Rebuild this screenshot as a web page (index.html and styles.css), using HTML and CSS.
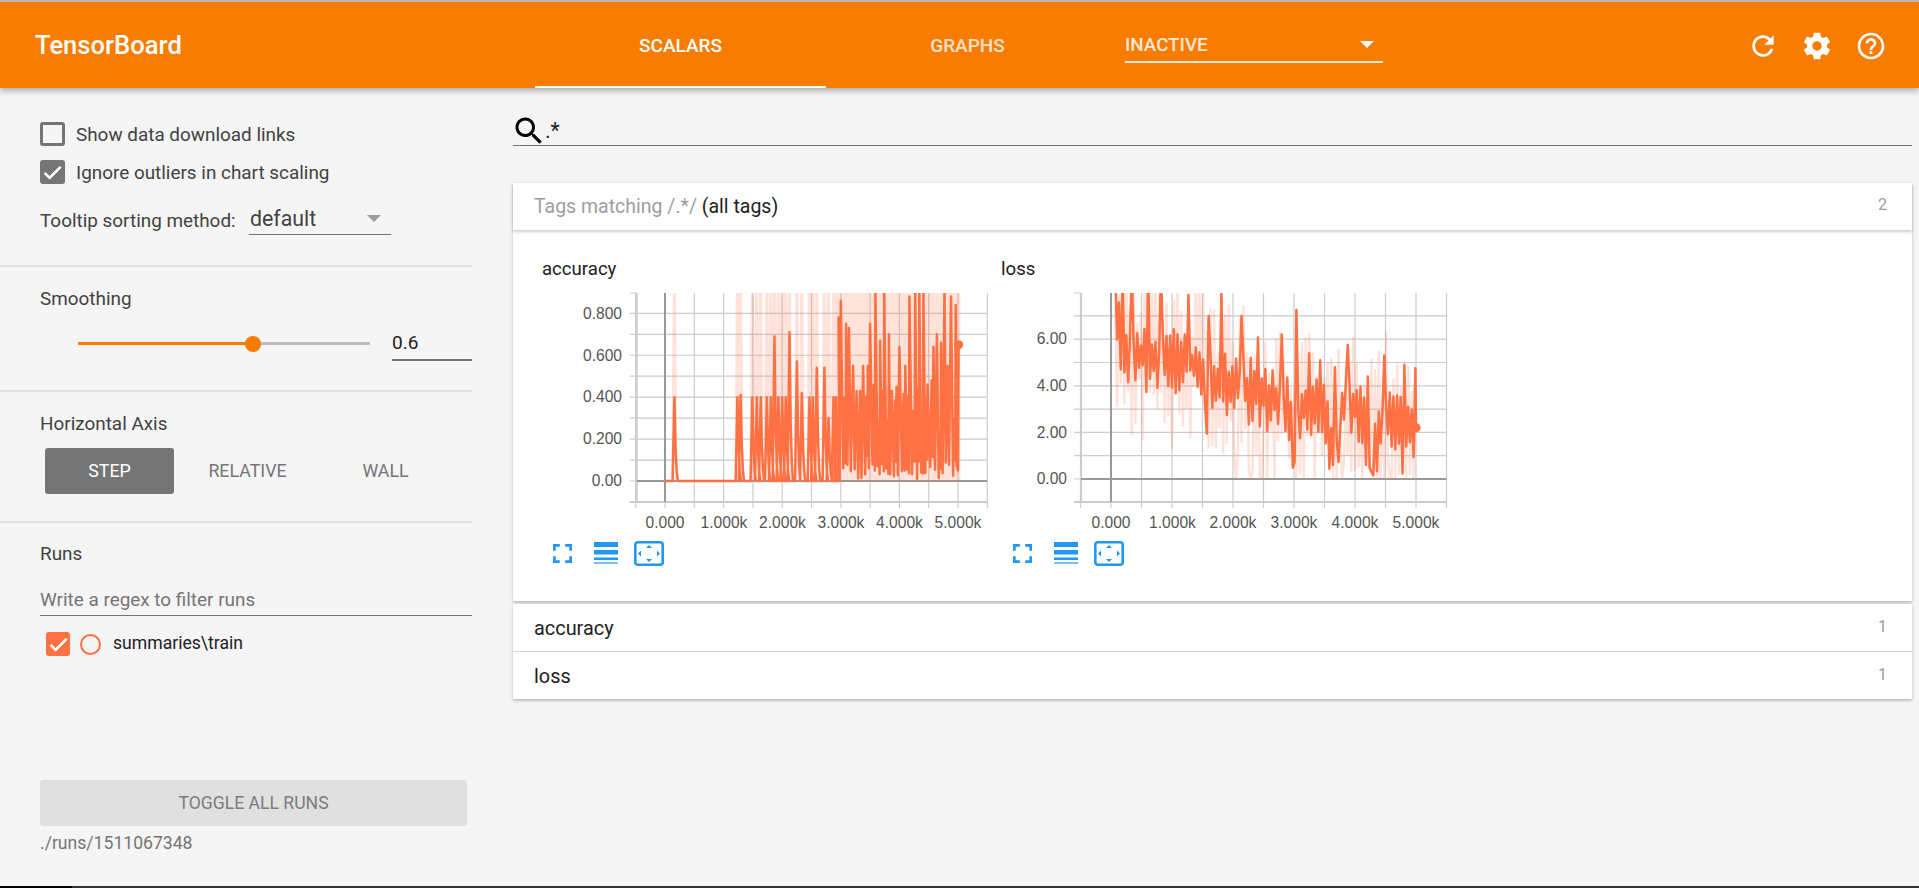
FILE: index.html
```html
<!DOCTYPE html>
<html lang="en">
<head>
  <meta charset="UTF-8">
  <title>TensorBoard</title>
  <link rel="stylesheet" href="styles.css">
</head>
<body>
  <div class="app">
    <header class="toolbar">
      <div class="logo">TensorBoard</div>
      <div class="tab tab-active">SCALARS</div>
      <div class="tab tab-graphs">GRAPHS</div>
      <div class="run-select"><span>INACTIVE</span><i class="arrow-white"></i></div>
      <div class="toolbar-icons">
        <svg viewBox="0 0 24 24"><path d="M17.65 6.35C16.2 4.9 14.21 4 12 4c-4.42 0-7.99 3.58-7.99 8s3.57 8 7.99 8c3.73 0 6.84-2.55 7.73-6h-2.08c-.82 2.33-3.04 4-5.65 4-3.31 0-6-2.69-6-6s2.69-6 6-6c1.66 0 3.14.69 4.22 1.78L13 11h7V4l-2.35 2.35z"/></svg>
        <svg viewBox="0 0 24 24"><path d="M19.43 12.98c.04-.32.07-.64.07-.98s-.03-.66-.07-.98l2.11-1.65c.19-.15.24-.42.12-.64l-2-3.46c-.12-.22-.39-.3-.61-.22l-2.49 1c-.52-.4-1.08-.73-1.69-.98l-.38-2.65C14.46 2.18 14.25 2 14 2h-4c-.25 0-.46.18-.49.42l-.38 2.65c-.61.25-1.17.59-1.69.98l-2.49-1c-.23-.09-.49 0-.61.22l-2 3.46c-.13.22-.07.49.12.64l2.11 1.65c-.04.32-.07.65-.07.98s.03.66.07.98l-2.11 1.65c-.19.15-.24.42-.12.64l2 3.46c.12.22.39.3.61.22l2.49-1c.52.4 1.08.73 1.69.98l.38 2.65c.03.24.24.42.49.42h4c.25 0 .46-.18.49-.42l.38-2.65c.61-.25 1.17-.59 1.69-.98l2.49 1c.23.09.49 0 .61-.22l2-3.46c.12-.22.07-.49-.12-.64l-2.11-1.65zM12 15.5c-1.93 0-3.5-1.57-3.5-3.5s1.57-3.5 3.5-3.5 3.5 1.57 3.5 3.5-1.57 3.5-3.5 3.5z"/></svg>
        <svg viewBox="0 0 24 24"><path d="M11 18h2v-2h-2v2zm1-16C6.48 2 2 6.48 2 12s4.48 10 10 10 10-4.48 10-10S17.52 2 12 2zm0 18c-4.41 0-8-3.59-8-8s3.59-8 8-8 8 3.59 8 8-3.59 8-8 8zm0-14c-2.21 0-4 1.79-4 4h2c0-1.1.9-2 2-2s2 .9 2 2c0 2-3 1.75-3 5h2c0-2.25 3-2.5 3-5 0-2.21-1.79-4-4-4z"/></svg>
      </div>
    </header>

    <div class="content">
      <aside class="sidebar">
        <section class="side-section options">
          <div class="check-row">
            <span class="checkbox"></span>
            <span>Show data download links</span>
          </div>
          <div class="check-row">
            <span class="checkbox checkbox-on"><svg viewBox="0 0 24 24"><path d="M9 16.17L4.83 12l-1.41 1.41L9 19 21 7l-1.41-1.41z"/></svg></span>
            <span>Ignore outliers in chart scaling</span>
          </div>
          <div class="tooltip-row">
            <span class="tooltip-label">Tooltip sorting method:</span>
            <div class="dropdown"><span>default</span><i class="arrow-grey"></i></div>
          </div>
        </section>

        <section class="side-section smoothing">
          <div class="side-title">Smoothing</div>
          <div class="slider-row">
            <div class="slider"><div class="slider-fill"></div><div class="slider-knob"></div></div>
            <div class="slider-value">0.6</div>
          </div>
        </section>

        <section class="side-section axis">
          <div class="side-title">Horizontal Axis</div>
          <div class="axis-buttons">
            <div class="axis-btn axis-btn-on">STEP</div>
            <div class="axis-btn">RELATIVE</div>
            <div class="axis-btn">WALL</div>
          </div>
        </section>

        <section class="runs">
          <div class="side-title">Runs</div>
          <div class="run-filter">Write a regex to filter runs</div>
          <div class="run-row">
            <span class="checkbox checkbox-run"><svg viewBox="0 0 24 24"><path d="M9 16.17L4.83 12l-1.41 1.41L9 19 21 7l-1.41-1.41z"/></svg></span>
            <span class="run-dot"></span>
            <span class="run-name">summaries\train</span>
          </div>
        </section>

        <div class="side-footer">
          <div class="toggle-btn">TOGGLE ALL RUNS</div>
          <div class="run-path">./runs/1511067348</div>
        </div>
      </aside>

      <main class="main">
        <div class="search">
          <svg viewBox="0 0 24 24"><path d="M15.5 14h-.79l-.28-.27C15.41 12.59 16 11.11 16 9.5 16 5.91 13.09 3 9.5 3S3 5.91 3 9.5 5.91 16 9.5 16c1.61 0 3.09-.59 4.23-1.57l.27.28v.79l5 4.99L20.49 19l-4.99-5zm-6 0C7.01 14 5 11.99 5 9.5S7.01 5 9.5 5 14 7.01 14 9.5 11.99 14 9.5 14z"/></svg>
          <span>.*</span>
        </div>

        <div class="card card-open">
          <div class="card-head">
            <span><span class="muted">Tags matching /.*/</span> (all tags)</span>
            <span class="count">2</span>
          </div>
          <div class="card-body">
            <div class="tile">
              <div class="tile-title">accuracy</div>
              <svg class="plot" id="accuracy" viewBox="530 285 460 245">
                <g class="grid"></g>
                <path class="raw"/>
                <path class="smooth"/>
                <circle class="dot" r="4.6"/>
                <g class="ticks">
                  <text class="yl" x="622" y="318.5">0.800</text>
                  <text class="yl" x="622" y="360.5">0.600</text>
                  <text class="yl" x="622" y="402">0.400</text>
                  <text class="yl" x="622" y="444">0.200</text>
                  <text class="yl" x="622" y="486">0.00</text>
                  <text class="xl" x="665" y="527.5">0.000</text>
                  <text class="xl" x="724" y="527.5">1.000k</text>
                  <text class="xl" x="782.5" y="527.5">2.000k</text>
                  <text class="xl" x="841" y="527.5">3.000k</text>
                  <text class="xl" x="899.5" y="527.5">4.000k</text>
                  <text class="xl" x="958" y="527.5">5.000k</text>
                </g>
              </svg>
              <div class="tile-icons">
                <svg class="ic-full" viewBox="5 5 14 14"><path d="M7 14H5v5h5v-2H7v-3zm-2-4h2V7h3V5H5v5zm12 7h-3v2h5v-5h-2v3zM14 5v2h3v3h2V5h-5z"/></svg>
                <svg class="ic-lines" viewBox="0 0 24 22"><rect width="24" height="5"/><rect y="8" width="24" height="4.5"/><rect y="15.5" width="24" height="2.5"/><rect y="20" width="24" height="2" opacity=".6"/></svg>
                <svg class="ic-fit" viewBox="0 0 30 25"><rect x="1.3" y="1.3" width="27.4" height="22.4" rx="2.5"/><path class="tri" d="M15 4l3 3h-6zM15 21l3-3h-6zM4 12.5l3-3v6zM26 12.5l-3-3v6z"/></svg>
              </div>
            </div>
            <div class="tile">
              <div class="tile-title">loss</div>
              <svg class="plot" id="loss" viewBox="990 285 460 245">
                <g class="grid"></g>
                <path class="raw"/>
                <path class="smooth"/>
                <circle class="dot" r="4.6"/>
                <g class="ticks">
                  <text class="yl" x="1067" y="344">6.00</text>
                  <text class="yl" x="1067" y="391">4.00</text>
                  <text class="yl" x="1067" y="437.5">2.00</text>
                  <text class="yl" x="1067" y="484">0.00</text>
                  <text class="xl" x="1111" y="527.5">0.000</text>
                  <text class="xl" x="1172.5" y="527.5">1.000k</text>
                  <text class="xl" x="1233" y="527.5">2.000k</text>
                  <text class="xl" x="1294" y="527.5">3.000k</text>
                  <text class="xl" x="1355" y="527.5">4.000k</text>
                  <text class="xl" x="1416" y="527.5">5.000k</text>
                </g>
              </svg>
              <div class="tile-icons">
                <svg class="ic-full" viewBox="5 5 14 14"><path d="M7 14H5v5h5v-2H7v-3zm-2-4h2V7h3V5H5v5zm12 7h-3v2h5v-5h-2v3zM14 5v2h3v3h2V5h-5z"/></svg>
                <svg class="ic-lines" viewBox="0 0 24 22"><rect width="24" height="5"/><rect y="8" width="24" height="4.5"/><rect y="15.5" width="24" height="2.5"/><rect y="20" width="24" height="2" opacity=".6"/></svg>
                <svg class="ic-fit" viewBox="0 0 30 25"><rect x="1.3" y="1.3" width="27.4" height="22.4" rx="2.5"/><path class="tri" d="M15 4l3 3h-6zM15 21l3-3h-6zM4 12.5l3-3v6zM26 12.5l-3-3v6z"/></svg>
              </div>
            </div>
          </div>
        </div>

        <div class="card card-closed">
          <div class="card-head"><span>accuracy</span><span class="count">1</span></div>
          <div class="card-head card-head-split"><span>loss</span><span class="count">1</span></div>
        </div>
      </main>
    </div>

    <div class="taskbar"><div class="taskbar-start"></div></div>
  </div>
  <script src="chart.js"></script>
</body>
</html>
```

FILE: styles.css
```css
* {
  box-sizing: border-box;
}
html, body {
  margin: 0;
  height: 100%;
  overflow: hidden;
}
body {
  font-family: Roboto, Arial, sans-serif;
  background: #f5f5f5;
  color: #424242;
}
.app {
  height: 888px;
  display: flex;
  flex-direction: column;
  border-top: 2px solid #c4bcb6;
}

/* toolbar */
.toolbar {
  height: 86px;
  flex: none;
  display: flex;
  align-items: stretch;
  background: #f87c00;
  color: #fff;
  box-shadow: 0 3px 6px rgba(0,0,0,0.3);
  position: relative;
  z-index: 2;
}
.logo {
  width: 535px;
  padding-left: 35px;
  font-size: 25.6px;
  font-weight: 500;
  line-height: 86px;
}
.tab {
  width: 291px;
  padding-top: 1px;
  font-size: 19px;
  font-weight: 500;
  line-height: 86px;
  text-align: center;
  color: rgba(255,255,255,0.8);
}
.tab-active {
  color: #fff;
  border-bottom: 2px solid #fff;
}
.tab-graphs {
  width: 283px;
}
.run-select {
  width: 258px;
  height: 61px;
  margin-left: 16px;
  display: flex;
  align-items: center;
  justify-content: space-between;
  padding: 26px 9px 0 0;
  font-size: 18.8px;
  font-weight: 500;
  color: rgba(255,255,255,0.85);
  border-bottom: 2px solid rgba(255,255,255,0.85);
}
.arrow-white {
  width: 0;
  height: 0;
  border-left: 7px solid transparent;
  border-right: 7px solid transparent;
  border-top: 7px solid #fff;
}
.toolbar-icons {
  margin-left: auto;
  padding: 1px 32px 0 0;
  display: flex;
  align-items: center;
  gap: 22px;
}
.toolbar-icons svg {
  width: 32px;
  height: 32px;
  fill: #fff;
}

.content {
  flex: 1;
  min-height: 0;
  display: flex;
}

/* sidebar */
.sidebar {
  width: 472px;
  flex: none;
  display: flex;
  flex-direction: column;
  font-size: 18.9px;
}
.side-section {
  padding-left: 40px;
  border-bottom: 2px solid #e0e0e0;
}
.side-title {
  line-height: 24px;
  color: #424242;
}
.options {
  height: 179px;
  padding-top: 34px;
}
.check-row {
  height: 24px;
  display: flex;
  align-items: center;
  gap: 11px;
  margin-bottom: 14px;
}
.checkbox {
  width: 25px;
  height: 24px;
  flex: none;
  display: block;
  border: 3px solid #757575;
  border-radius: 3px;
}
.checkbox svg {
  display: block;
  width: 23px;
  height: 23px;
  margin: -2.5px 0 0 -2px;
  fill: #fff;
  stroke: #fff;
  stroke-width: 1;
}
.checkbox-on {
  background: #757575;
}
.tooltip-row {
  display: flex;
  align-items: center;
  margin-top: 20px;
  height: 31px;
}
.tooltip-label {
  width: 209px;
  padding-top: 2px;
  flex: none;
}
.dropdown {
  width: 142px;
  height: 31px;
  display: flex;
  align-items: center;
  justify-content: space-between;
  padding: 0 10px 2px 1px;
  font-size: 21.3px;
  border-bottom: 1px solid #757575;
}
.arrow-grey {
  width: 0;
  height: 0;
  border-left: 7px solid transparent;
  border-right: 7px solid transparent;
  border-top: 7px solid #9e9e9e;
}
.smoothing {
  height: 125px;
  padding-top: 20px;
}
.slider-row {
  display: flex;
  align-items: center;
  margin-top: 17px;
  height: 33px;
}
.slider {
  width: 292px;
  height: 3px;
  margin: 0 22px 2px 38px;
  background: #bdbdbd;
  position: relative;
}
.slider-fill {
  width: 175px;
  height: 3px;
  background: #f87c00;
}
.slider-knob {
  position: absolute;
  left: 167px;
  top: -6.5px;
  width: 16px;
  height: 16px;
  border-radius: 50%;
  background: #f87c00;
}
.slider-value {
  width: 80px;
  height: 33px;
  line-height: 29px;
  font-size: 19px;
  color: #212121;
  border-bottom: 2px solid #757575;
}
.axis {
  height: 131px;
  padding-top: 20px;
}
.axis-buttons {
  display: flex;
  margin: 12px 0 0 5px;
}
.axis-btn {
  width: 129px;
  height: 46px;
  margin-right: 9px;
  border-radius: 3px;
  font-size: 17.8px;
  line-height: 46px;
  text-align: center;
  color: #757575;
}
.axis-btn-on {
  background: #757575;
  color: #fff;
}
.runs {
  padding: 19px 0 0 40px;
}
.run-filter {
  height: 30px;
  margin-top: 20px;
  line-height: 27px;
  color: #757575;
  border-bottom: 1.5px solid #757575;
}
.run-row {
  display: flex;
  align-items: center;
  margin: 16px 0 0 6px;
  height: 24px;
}
.checkbox-run {
  width: 24px;
  background: #ff7043;
  border-color: #ff7043;
}
.run-dot {
  width: 21px;
  height: 21px;
  margin: 0 12px 0 10px;
  border: 2px solid #ff7043;
  border-radius: 50%;
}
.run-name {
  font-size: 17.6px;
  padding-bottom: 2px;
  color: #212121;
}
.side-footer {
  margin-top: auto;
  padding: 0 5px 32px 40px;
}
.toggle-btn {
  height: 46px;
  border-radius: 3px;
  background: #e0e0e0;
  color: #7c7c7c;
  font-size: 17.6px;
  line-height: 46px;
  text-align: center;
}
.run-path {
  margin-top: 6px;
  line-height: 22px;
  font-size: 17.6px;
  color: #757575;
}

/* main column */
.main {
  flex: 1;
  min-width: 0;
  padding: 0 7px 0 41px;
}
.search {
  height: 58px;
  display: flex;
  align-items: flex-end;
  font-size: 21.3px;
  color: #212121;
  border-bottom: 1.5px solid #757575;
}
.search svg {
  width: 36px;
  height: 36px;
  margin: 0 -3px -4px -2px;
  fill: #000;
}
.search span {
  line-height: 32px;
  margin: 0 0 -2px 1px;
}
.card {
  background: #fff;
  box-shadow: 0 2px 2px rgba(0,0,0,0.14), 0 1px 5px rgba(0,0,0,0.12);
}
.card-open {
  margin-top: 37px;
}
.card-closed {
  margin-top: 3px;
}
.card-head {
  height: 47px;
  padding: 0 25px 0 21px;
  display: flex;
  justify-content: space-between;
  align-items: center;
  font-size: 19.5px;
  color: #212121;
}
.card-closed .card-head {
  font-size: 19.9px;
  padding-top: 1px;
}
.card-open .card-head {
  box-shadow: 0 2px 3px rgba(0,0,0,0.2);
  position: relative;
}
.card-head-split {
  height: 48px;
  border-top: 1.5px solid #d0d0d0;
}
.muted {
  color: #9e9e9e;
}
.card-head .count {
  font-size: 16px;
  color: #9e9e9e;
  margin-bottom: 4px;
}
.card-body {
  height: 371px;
  padding: 25px 0 0 17px;
  display: flex;
}

/* chart tiles */
.tile {
  width: 460px;
}
.tile-title {
  height: 30px;
  padding-left: 12px;
  font-size: 18.6px;
  line-height: 28px;
  color: #212121;
}
.tile + .tile .tile-title {
  padding-left: 11px;
}
.plot {
  display: block;
  width: 460px;
  height: 245px;
}
.plot text {
  font-family: "Liberation Sans", Arial, sans-serif;
  font-size: 15.6px;
  fill: #555;
}
.yl {
  text-anchor: end;
}
.xl {
  text-anchor: middle;
}
.raw {
  fill: none;
  stroke: #ff7043;
  stroke-opacity: 0.2;
  stroke-width: 2.4;
}
.smooth {
  fill: none;
  stroke: #ff7043;
  stroke-width: 2.5;
  stroke-linejoin: round;
}
.dot {
  fill: #ff7043;
}
.grid path {
  fill: none;
}
.tile-icons {
  height: 26px;
  margin-top: 10px;
  padding-left: 23px;
  display: flex;
  align-items: center;
}
.tile-icons svg {
  fill: #2196f3;
  flex: none;
}
.ic-full {
  width: 19px;
  height: 19px;
  margin-right: 22px;
}
.ic-lines {
  width: 24px;
  height: 22px;
  margin-right: 16px;
}
.ic-fit {
  width: 30px;
  height: 25px;
}
.ic-fit rect {
  fill: none;
  stroke: #2196f3;
  stroke-width: 2.6;
}

.taskbar {
  height: 2px;
  flex: none;
  background: #333;
}
.taskbar-start {
  width: 72px;
  height: 2px;
  background: #000;
}
```

FILE: chart.js
```js
// little seeded generator so the noise comes out the same on every load
function makeRandom(seed) {
  return function() {
    seed = (seed * 16807) % 2147483647;
    return (seed - 1) / 2147483646;
  };
}

function toPath(points, c) {
  return points.map(function(p, i) {
    var x = c.x0 + p[0] * c.perK;
    var y = c.y0 - p[1] * c.perUnit;
    return (i ? 'L' : 'M') + x.toFixed(1) + ' ' + y.toFixed(1);
  }).join('');
}

function drawGrid(svg, c) {
  var thin = '', k, v;
  for (k = -0.5; k <= 5.5; k += 0.5) {
    var x = c.x0 + k * c.perK;
    thin += 'M' + x + ' ' + c.top + 'V' + (c.bottom + 6);
  }
  for (v = c.vMin; v <= c.vMax + 0.001; v += c.vStep) {
    var y = c.y0 - v * c.perUnit;
    thin += 'M' + (c.left - 7) + ' ' + y + 'H' + c.right;
  }
  thin += 'M' + (c.left - 7) + ' ' + c.top + 'H' + c.left;
  var g = svg.querySelector('.grid');
  var ns = 'http://www.w3.org/2000/svg';
  function add(d, color, width) {
    var p = document.createElementNS(ns, 'path');
    p.setAttribute('d', d);
    p.setAttribute('stroke', color);
    p.setAttribute('stroke-width', width);
    g.appendChild(p);
  }
  add(thin, '#ccc', 1.2);
  add('M' + (c.left - 7) + ' ' + c.bottom + 'H' + c.right + 'M' + c.left + ' ' + c.top + 'V' + c.bottom, '#ccc', 2);
  add('M' + c.left + ' ' + c.y0 + 'H' + c.right + 'M' + c.x0 + ' ' + c.top + 'V' + c.bottom, '#999', 2);
}

function drawChart(id, c, raw, smooth) {
  var svg = document.getElementById(id);
  var ns = 'http://www.w3.org/2000/svg';
  drawGrid(svg, c);

  var clip = document.createElementNS(ns, 'clipPath');
  clip.id = id + '-clip';
  var r = document.createElementNS(ns, 'rect');
  r.setAttribute('x', c.left);
  r.setAttribute('y', c.top);
  r.setAttribute('width', c.right - c.left);
  r.setAttribute('height', c.bottom - c.top);
  clip.appendChild(r);
  svg.appendChild(clip);

  var rawEl = svg.querySelector('.raw');
  var smoothEl = svg.querySelector('.smooth');
  rawEl.setAttribute('d', toPath(raw, c));
  smoothEl.setAttribute('d', toPath(smooth, c));
  rawEl.setAttribute('clip-path', 'url(#' + id + '-clip)');
  smoothEl.setAttribute('clip-path', 'url(#' + id + '-clip)');

  var last = smooth[smooth.length - 1];
  var dot = svg.querySelector('.dot');
  dot.setAttribute('cx', c.x0 + last[0] * c.perK);
  dot.setAttribute('cy', c.y0 - last[1] * c.perUnit);
}

// accuracy: flat at zero, then separate spikes, then a dense noisy part
function accuracyData() {
  var rand = makeRandom(4711);
  var early = [[0.16,0.4],[1.236,0.4],[1.29,0.41],[1.49,0.4],[1.566,0.4],[1.634,0.4],[1.737,0.4],[1.805,0.4],
    [1.868,0.69],[1.936,0.4],[2.0,0.4],[2.06,0.4],[2.124,0.71],[2.25,0.57],[2.335,0.42],[2.466,0.4],[2.523,0.4],
    [2.59,0.54],[2.72,0.54],[2.79,0.3],[2.876,0.4],[2.92,0.4]];
  var dense = [[2.96,0.78],[3.0,0.86],[3.09,0.75],[3.14,0.73],[3.21,0.55],[3.27,0.43],[3.33,0.43],[3.38,0.55],
    [3.46,0.55],[3.5,0.75],[3.59,0.92],[3.67,0.67],[3.74,0.92],[3.82,0.7],[3.87,0.43],[3.95,0.45],[4.0,0.64],
    [4.1,0.55],[4.17,0.88],[4.27,0.92],[4.34,0.92],[4.41,0.92],[4.48,0.46],[4.58,0.64],[4.64,0.7],[4.71,0.66],
    [4.77,0.92],[4.82,0.55],[4.88,0.88],[4.96,0.84]];
  var smooth = [[0, 0]], raw = [[0, 0]];
  early.forEach(function(p) {
    var s = p[0], v = p[1];
    smooth.push([s - 0.03, 0], [s, v], [s + 0.02, v * 0.4], [s + 0.04, v * 0.12], [s + 0.06, 0]);
    raw.push([s - 0.03, 0], [s, 1.2], [s + 0.03, 0]);
  });
  dense.forEach(function(p, i) {
    var s = p[0], next = dense[i + 1] ? dense[i + 1][0] : 5.0;
    var gap = next - s;
    smooth.push([s, p[1]]);
    smooth.push([s + gap * 0.45, rand() * 0.09]);
    // only the wider gaps get a second smaller peak
    if (gap > 0.07) {
      smooth.push([s + gap * 0.7, 0.2 + rand() * 0.3]);
      smooth.push([s + gap * 0.9, rand() * 0.12]);
    }
  });
  smooth.push([5.0, 0.05], [5.01, 0.65]);
  for (var s = 2.94; s < 5.02; s += 0.022) {
    raw.push([s, 0], [s + 0.011, 1.2]);
  }
  raw.push([5.02, 0]);
  return { raw: raw, smooth: smooth };
}

// loss: falling trend, line zigzags around it with the big peaks placed by hand
function lossData() {
  var rand = makeRandom(90210);
  var trend = [[0.08,6.5],[0.3,5.2],[1,5],[1.5,5],[1.6,4],[2,4],[2.5,3.6],[2.9,3],[3,1.5],[3.1,2.8],[3.5,3.2],
    [3.6,1.8],[3.9,3.3],[4.1,2.5],[4.3,1.3],[4.5,2.6],[4.8,2.2],[5,2.2]];
  var marks = [[0.08,9],[0.2,9],[0.33,9],[0.6,9],[0.83,9],[1.28,7.9],[1.57,1.95],[1.6,7],[1.82,8],[2.14,1.37],[2.15,7],
    [2.41,6.07],[2.8,6.2],[3.0,0.73],[3.03,7.25],[3.25,5.4],[3.43,5.1],[3.59,0.44],[3.68,4.8],[3.73,0.73],[3.89,5.75],
    [4.17,0.6],[4.2,4.4],[4.28,0.3],[4.48,5.3],[4.77,0.23],[4.81,4.9],[4.96,0.95],[4.98,4.75]];
  var step = 0.03;
  function meanAt(s) {
    for (var i = 1; i < trend.length; i++) {
      if (s <= trend[i][0]) {
        var a = trend[i - 1], b = trend[i];
        return a[1] + (b[1] - a[1]) * (s - a[0]) / (b[0] - a[0]);
      }
    }
    return 2.2;
  }
  var raw = [], smooth = [], sign = 1;
  for (var s = 0.07; s <= 5.0; s += step) {
    var mean = meanAt(s);
    var v = mean + sign * (0.2 + rand() * 1.25);
    var r = mean + sign * (0.8 + rand() * 3);
    marks.forEach(function(m) {
      if (Math.abs(s - m[0]) <= step / 2) {
        v = m[1];
      }
    });
    if (s > 1.2 && rand() < 0.04) r = 0;
    raw.push([s, Math.max(r, 0)]);
    smooth.push([s, Math.max(v, 0.1)]);
    sign = -sign;
  }
  smooth.push([5.0, 2.2]);
  return { raw: raw, smooth: smooth };
}

var acc = accuracyData();
drawChart('accuracy', {
  x0: 665, perK: 58.6, y0: 481, perUnit: 209.6,
  left: 636.7, right: 987, top: 293, bottom: 502,
  vMin: -0.1, vMax: 0.8, vStep: 0.1
}, acc.raw, acc.smooth);

var los = lossData();
drawChart('loss', {
  x0: 1111, perK: 61, y0: 479, perUnit: 23.3,
  left: 1081, right: 1446.5, top: 293, bottom: 502,
  vMin: -1, vMax: 7, vStep: 1
}, los.raw, los.smooth);
```
